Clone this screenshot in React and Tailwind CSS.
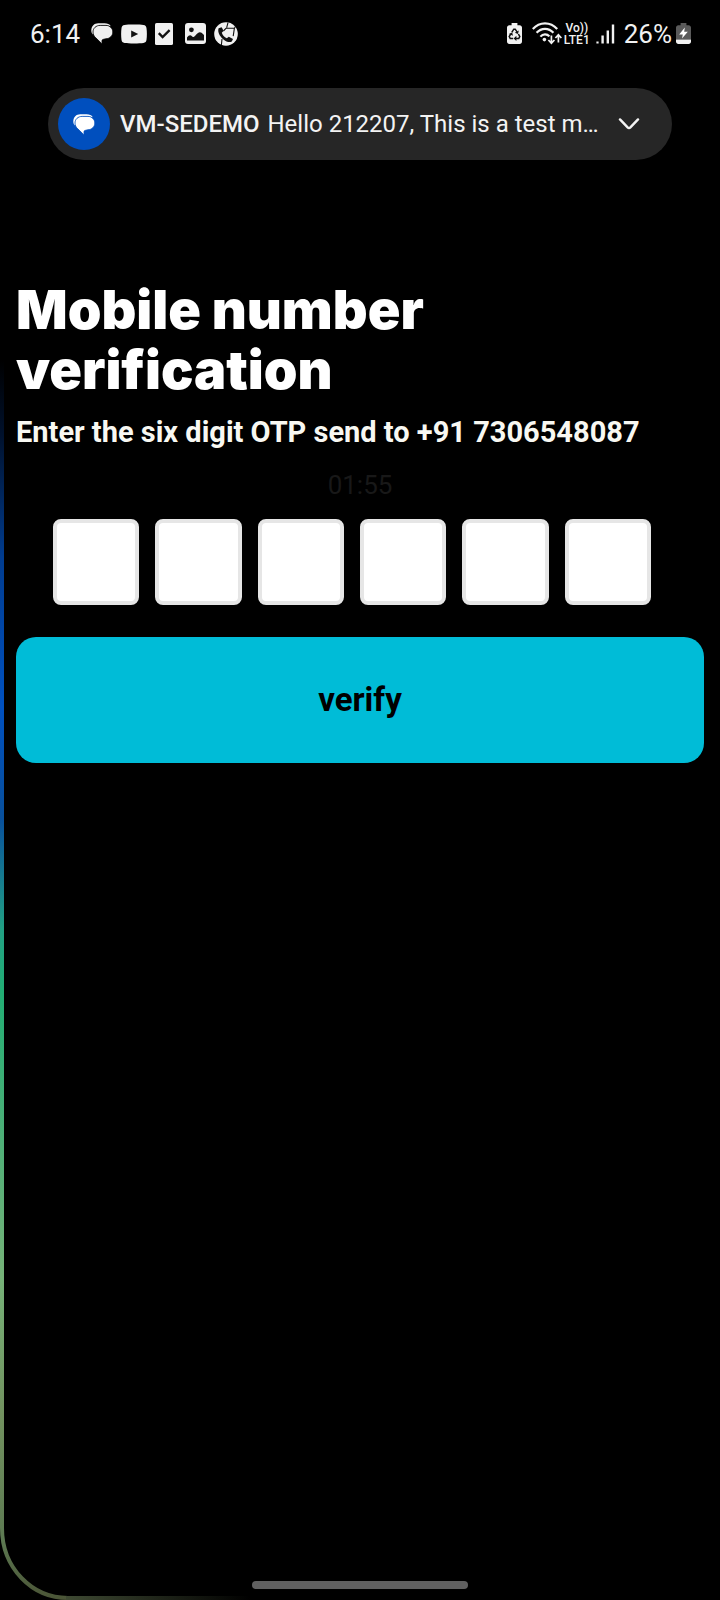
import { useRef, useState } from "react";

function ChatGlyph({ className, gap }) {
  return (
    <svg viewBox="0 0 22 21" className={className} aria-hidden="true">
      <path
        fill="currentColor"
        d="M0.3 7.6C0.3 3 3.4 0.3 7.2 0.3H13.6C16.4 0.3 18.6 1.2 19.8 3.2L16 2.6H9.6C5.2 2.6 2.4 5.4 2.2 9.6V11.8C1 10.8 0.3 9.4 0.3 7.6Z"
      />
      <path
        fill="currentColor"
        stroke={gap}
        strokeWidth="0.8"
        d="M2 9C2 5.2 5 2.4 9.2 2.4H15C18.8 2.4 21.8 5.4 21.8 9C21.8 12.8 18.8 15.6 15 15.8C13.2 16 11.8 16.4 11 17.2V20.9L4.6 14.6C2.8 13 2 11.2 2 9Z"
      />
    </svg>
  );
}

function YoutubeGlyph() {
  return (
    <svg viewBox="0 0 26 20" className="h-5 w-[26px]" aria-hidden="true">
      <path
        fill="#f1f1f1"
        d="M3.6 1C7 0.4 19 0.4 22.4 1C24.4 1.3 25.3 2.4 25.5 4.2C26 7.6 26 12.4 25.5 15.8C25.3 17.6 24.4 18.7 22.4 19C19 19.6 7 19.6 3.6 19C1.6 18.7 0.7 17.6 0.5 15.8C0 12.4 0 7.6 0.5 4.2C0.7 2.4 1.6 1.3 3.6 1Z"
      />
      <path fill="#111" d="M10.2 6.4L17.2 10L10.2 13.6Z" />
    </svg>
  );
}

function TaskGlyph() {
  return (
    <svg viewBox="0 0 18 22" className="h-[22px] w-[18px]" aria-hidden="true">
      <rect width="18" height="22" rx="1.6" fill="#f1f1f1" />
      <path d="M3.8 10.2L7.6 14L14.6 7.2" fill="none" stroke="#111" strokeWidth="2.4" />
    </svg>
  );
}

function PhotoGlyph() {
  return (
    <svg viewBox="0 0 21 21" className="h-[21px] w-[21px]" aria-hidden="true">
      <rect width="21" height="21" rx="3" fill="#f1f1f1" />
      <circle cx="6.4" cy="6.8" r="2.4" fill="#111" />
      <path
        fill="#111"
        d="M2 17.6V14.4C4 11.8 5.4 11.6 7 13.2C8.4 14.6 9.2 14.2 10.4 12.6C12.4 9.6 14.8 8.2 16.6 9.8L19 12V17.6Z"
      />
    </svg>
  );
}

function CallerGlyph() {
  return (
    <svg viewBox="0 0 24 24" className="h-6 w-6" aria-hidden="true">
      <circle cx="12" cy="12" r="11.8" fill="#f1f1f1" />
      <path
        fill="#111"
        d="M4.6 6.2L7.6 5.2C8.4 6.4 9 7.6 9.4 9L7.8 10.8C8.6 13.2 10.2 15 12.8 16.2L14.8 14.8L19 17L17.8 19.4C16 20.8 12.4 20 9.2 17.2C5.4 13.8 3.4 9.6 4.6 6.2Z"
      />
      <path
        fill="none"
        stroke="#111"
        strokeWidth="1.1"
        d="M14 0.6L12.6 5.8M12.2 6.2H20.4L19.2 14.2M20.4 6.2L21.6 4.2M9.4 9L12.2 6.2M8 17L7.4 23"
      />
    </svg>
  );
}

function RecycleBatteryGlyph() {
  return (
    <svg viewBox="0 0 15 21" className="h-[21px] w-[15px]" aria-hidden="true">
      <path
        fill="#f1f1f1"
        d="M4.6 0H10.4V2.2H12.6C14 2.2 15 3.2 15 4.6V18.6C15 20 14 21 12.6 21H2.4C1 21 0 20 0 18.6V4.6C0 3.2 1 2.2 2.4 2.2H4.6Z"
      />
      <path
        fill="none"
        stroke="#111"
        strokeWidth="1.5"
        d="M4.8 9.4L6.8 6.2H8.2L10.2 9.2M11.4 11L12.8 13.6L11.8 15.4H8.6M6.2 15.4H3.2L2.2 13.6L3.8 10.8"
      />
      <path fill="#111" d="M11.8 7.6L11 11L7.8 9.8ZM9.4 12.8V18L6.6 15.4ZM1.8 11L5.2 9.4L6 12.8Z" />
    </svg>
  );
}

function WifiGlyph() {
  return (
    <svg viewBox="0 0 30 23" className="h-[23px] w-[30px]" aria-hidden="true">
      <g fill="none" stroke="#f1f1f1" strokeWidth="2.2">
        <path d="M0.8 7C7.6 -0.6 18.4 -0.6 25.2 7" />
        <path d="M4.6 10.8C9.4 5.6 16.6 5.6 21.4 10.8" />
        <path d="M8.4 14.6C11 11.6 15 11.6 17.4 14.4" />
      </g>
      <circle cx="12.4" cy="17.6" r="1.8" fill="#f1f1f1" />
      <path
        fill="none"
        stroke="#f1f1f1"
        strokeWidth="1.7"
        d="M19.4 13.4V21M16.4 18L19.4 21.2L22.4 18M26.4 20.4V13M23.4 16L26.4 12.8L29.4 16"
      />
    </svg>
  );
}

function SignalGlyph() {
  return (
    <svg viewBox="0 0 19 20" className="h-5 w-[19px]" aria-hidden="true">
      <path
        fill="#f1f1f1"
        d="M0.4 17.4H2.6V19.6H0.4ZM5.4 11.6H7.8V19.6H5.4ZM10.6 6.4H13V19.6H10.6ZM15.8 0.4H18.2V19.6H15.8Z"
      />
    </svg>
  );
}

function ChargingBatteryGlyph() {
  return (
    <svg viewBox="0 0 15 21" className="h-[21px] w-[15px]" aria-hidden="true">
      <path
        fill="#5a5a5a"
        d="M4.6 0H10.4V2.2H12.6C14 2.2 15 3.2 15 4.6V16.4H0V4.6C0 3.2 1 2.2 2.4 2.2H4.6Z"
      />
      <path fill="#f1f1f1" d="M0 16.4H15V18.6C15 20 14 21 12.6 21H2.4C1 21 0 20 0 18.6Z" />
      <path fill="#fff" d="M8.8 4.6L3.2 11.4H6.8L6 15.6L11.8 8.8H8.2Z" />
    </svg>
  );
}

function StatusBar() {
  return (
    <header className="flex h-[67px] items-center justify-between pr-[29px] pl-[30px] text-[26px] leading-8 text-[#f1f1f1]">
      <div className="flex items-center">
        <span>6:14</span>
        <div className="ml-[11px] flex items-center gap-2">
          <ChatGlyph className="h-[21px] w-[22px]" gap="#000" />
          <YoutubeGlyph />
          <TaskGlyph />
          <span className="ml-1 flex">
            <PhotoGlyph />
          </span>
          <CallerGlyph />
        </div>
      </div>
      <div className="flex items-center">
        <RecycleBatteryGlyph />
        <span className="ml-[10px] flex">
          <WifiGlyph />
        </span>
        <span className="ml-[2px] flex flex-col items-center text-[12px] leading-3 font-medium">
          <span>Vo))</span>
          <span>LTE1</span>
        </span>
        <span className="ml-[6px] flex">
          <SignalGlyph />
        </span>
        <span className="mr-1 ml-[9px]">26%</span>
        <ChargingBatteryGlyph />
      </div>
    </header>
  );
}

function MessageBanner() {
  return (
    <button
      type="button"
      className="mx-12 mt-[21px] flex h-[72px] items-center rounded-full bg-[#262626] pr-8 pl-[10px] text-left text-[24px] leading-7 text-[#f3f3f3]"
    >
      <span className="flex size-[52px] shrink-0 items-center justify-center rounded-full bg-[#004fbe] text-white">
        <ChatGlyph className="h-[21px] w-[22px]" gap="#004fbe" />
      </span>
      <span className="ml-[10px] shrink-0 font-medium">VM-SEDEMO</span>
      <span className="ml-2 flex-1 whitespace-nowrap">Hello 212207, This is a test m…</span>
      <svg viewBox="0 0 22 12" className="h-3 w-[22px] shrink-0" aria-hidden="true">
        <path
          d="M2 1.4L9.6 9.4Q11 10.8 12.4 9.4L20 1.4"
          fill="none"
          stroke="currentColor"
          strokeWidth="2.4"
          strokeLinecap="round"
        />
      </svg>
    </button>
  );
}

function OtpFields() {
  const [digits, setDigits] = useState(["", "", "", "", "", ""]);
  const refs = useRef([]);

  function update(index, value) {
    const digit = value.replace(/\D/g, "").slice(-1);
    setDigits((prev) => prev.map((d, i) => (i === index ? digit : d)));
    if (digit && index < 5) refs.current[index + 1].focus();
  }

  return (
    <div className="mt-5 mr-[53px] ml-[37px] grid grid-cols-6 gap-4">
      {digits.map((digit, i) => (
        <input
          key={i}
          ref={(el) => {
            refs.current[i] = el;
          }}
          aria-label={`Digit ${i + 1}`}
          inputMode="numeric"
          value={digit}
          onChange={(e) => update(i, e.target.value)}
          className="aspect-square w-full min-w-0 rounded-lg border-4 border-[#e6e6e6] bg-white text-center text-[32px] text-black outline-none"
        />
      ))}
    </div>
  );
}

function EdgeGlow() {
  return (
    <svg
      viewBox="0 0 260 1240"
      className="pointer-events-none absolute bottom-0 left-0 h-[1240px] w-[260px]"
      aria-hidden="true"
    >
      <defs>
        <linearGradient id="edge-side" gradientUnits="userSpaceOnUse" x1="0" y1="0" x2="0" y2="1240">
          <stop offset="0" stopColor="#000" />
          <stop offset="0.06" stopColor="#00112c" />
          <stop offset="0.16" stopColor="#003c90" />
          <stop offset="0.28" stopColor="#0050c0" />
          <stop offset="0.37" stopColor="#08509c" />
          <stop offset="0.46" stopColor="#22a184" />
          <stop offset="0.51" stopColor="#22ae74" />
          <stop offset="0.63" stopColor="#4fb078" />
          <stop offset="0.74" stopColor="#76b278" />
          <stop offset="0.85" stopColor="#72925f" />
          <stop offset="0.95" stopColor="#5d7a52" />
          <stop offset="1" stopColor="#4a5436" />
        </linearGradient>
        <linearGradient id="edge-base" gradientUnits="userSpaceOnUse" x1="66" y1="0" x2="250" y2="0">
          <stop offset="0" stopColor="#3f4a33" />
          <stop offset="1" stopColor="#000" />
        </linearGradient>
      </defs>
      <path d="M2 0V1168" fill="none" stroke="url(#edge-side)" strokeWidth="4" />
      <path d="M2 1168C2 1208 32 1238 68 1238" fill="none" stroke="url(#edge-side)" strokeWidth="4" />
      <path d="M66 1236H250V1240H66Z" fill="url(#edge-base)" />
    </svg>
  );
}

export default function App() {
  return (
    <div className="relative flex min-h-screen flex-col overflow-hidden bg-black font-['Roboto',sans-serif] text-white">
      <EdgeGlow />
      <StatusBar />
      <MessageBanner />
      <main className="flex flex-col px-4 pt-[120px]">
        <h1 className="max-w-[480px] font-['Inter',sans-serif] text-[54px] leading-[60px] font-black">
          Mobile number verification
        </h1>
        <p className="mt-4 text-[29px] leading-8 font-bold text-[#f8f8f2]">
          Enter the six digit OTP send to +91 7306548087
        </p>
        <p className="mt-[23px] text-center text-[26px] leading-7 text-[#181818]">01:55</p>
        <OtpFields />
        <button
          type="button"
          className="mt-8 h-[126px] rounded-[20px] bg-[#00bcd7] text-[33px] leading-9 font-bold text-black"
        >
          verify
        </button>
      </main>
      <div className="mx-auto mt-auto mb-[11px] h-2 w-[216px] rounded-full bg-[#606060]" />
    </div>
  );
}
